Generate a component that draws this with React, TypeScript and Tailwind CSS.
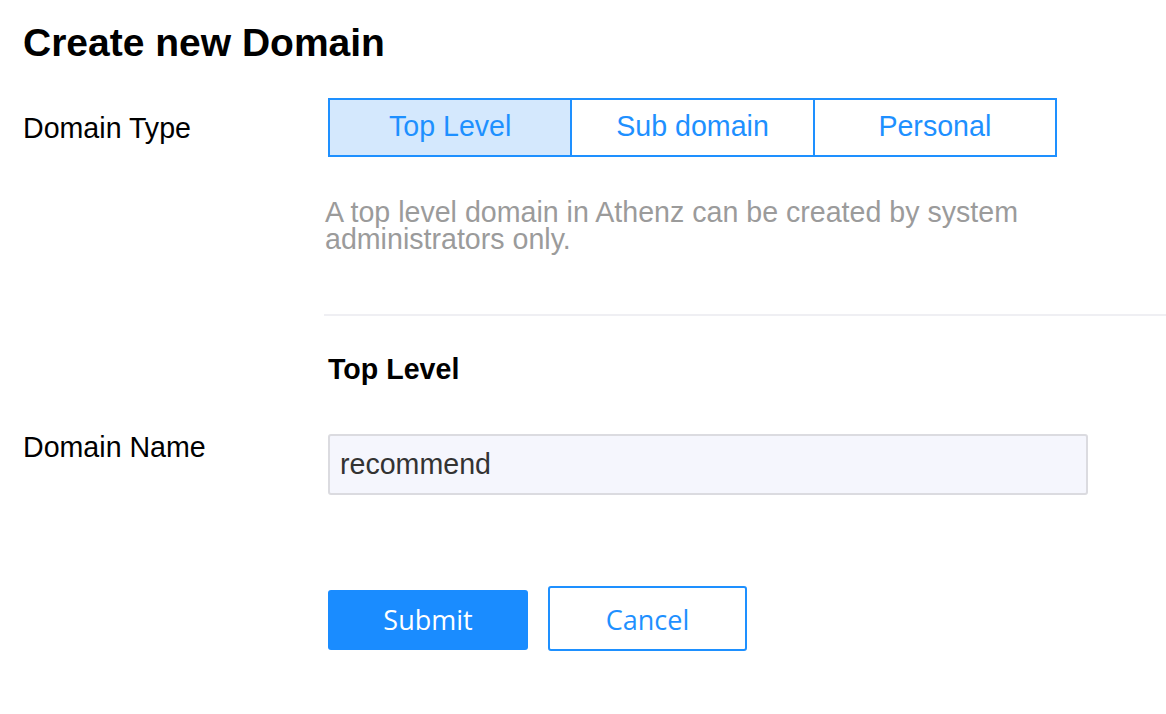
import React, { useState } from 'react';

const types = ['Top Level', 'Sub domain', 'Personal'];

const App: React.FC = () => {
    const [active, setActive] = useState('Top Level');

    return (
        <div className="min-h-screen bg-white pl-[23px] pt-[20px] font-['Liberation_Sans',Arial,sans-serif] text-black">
            <h1 className="text-[39px] font-bold leading-[46px]">Create new Domain</h1>

            <div className="mt-[32px] flex items-center">
                <div className="w-[305px] text-[28.6px] leading-[32px]">Domain Type</div>
                <div className="flex h-[59px] w-[729px] border-2 border-[#1e90ff]">
                    {types.map((t, i) => (
                        <button
                            key={t}
                            onClick={() => setActive(t)}
                            className={`flex flex-1 items-center justify-center pb-1 text-[28.6px] leading-[32px] text-[#1e90ff] ${i > 0 ? 'border-l-2 border-[#1e90ff]' : ''} ${active === t ? 'bg-[#d4e8fd]' : 'bg-white'}`}
                        >
                            {t}
                        </button>
                    ))}
                </div>
            </div>

            <div className="ml-[305px]">
                <p className="mt-[42px] -ml-[3px] w-[729px] text-[28.6px] leading-[27px] text-[#9b9b9b]">
                    A top level domain in Athenz can be created by system administrators only.
                </p>
                <div className="mt-[61px] -ml-[4px] h-[2px] bg-[#efeff3]" />
                <h2 className="mt-[37px] text-[28.6px] font-bold leading-[32px]">Top Level</h2>
            </div>

            <div className="mt-[46px] flex items-start">
                <div className="w-[305px] text-[28.6px] leading-[32px]">Domain Name</div>
                <input
                    defaultValue="recommend"
                    className="mt-[3px] h-[61px] w-[760px] rounded-[3px] border-2 border-[#dbdbe0] bg-[#f5f6fd] px-[10px] text-[28.6px] text-[#333] outline-none"
                />
            </div>

            <div className="ml-[305px] mt-[91px] flex items-start gap-[20px] font-['Open_Sans',sans-serif] text-[27px]">
                <button className="mt-[4px] h-[60px] w-[200px] rounded-[3px] bg-[#1a8cff] text-white">Submit</button>
                <button className="h-[65px] w-[199px] rounded-[3px] border-2 border-[#1e90ff] bg-white pt-[4px] text-[#1e90ff]">Cancel</button>
            </div>
        </div>
    );
};

export default App;
